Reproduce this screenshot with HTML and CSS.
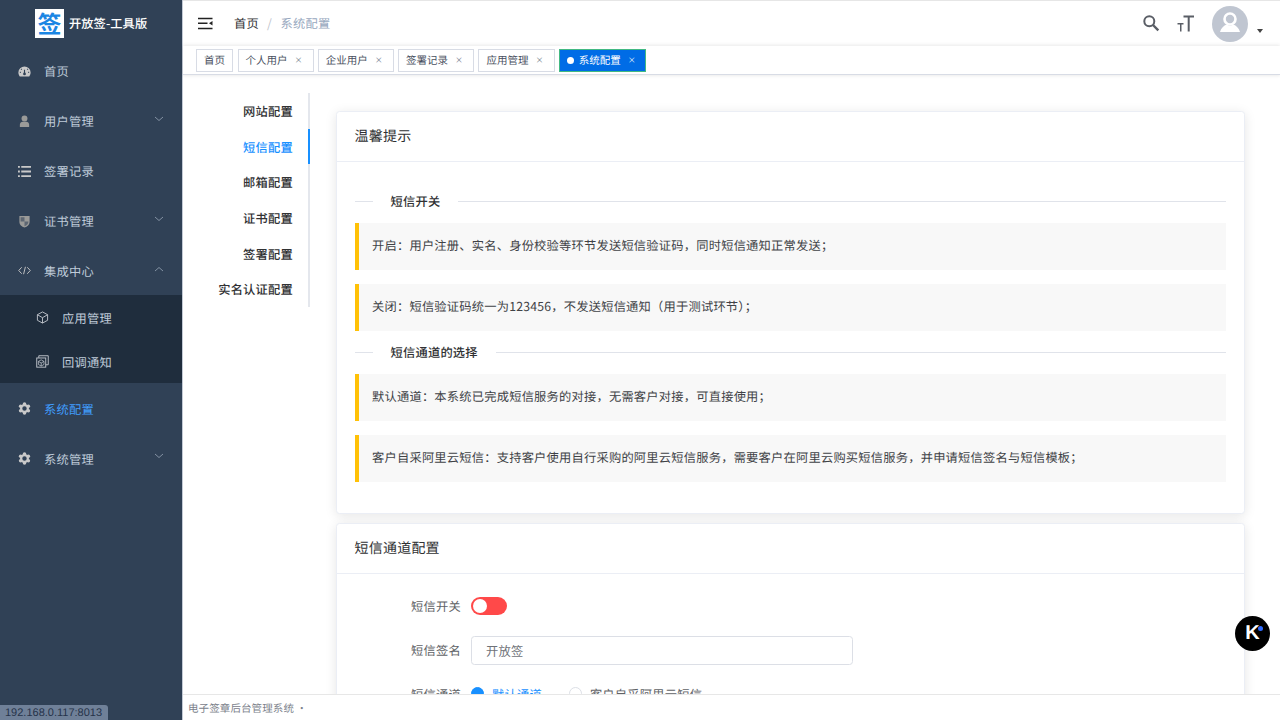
FILE: index.html
```html
<!DOCTYPE html>
<html lang="zh">
<head>
<meta charset="utf-8">
<title>系统配置</title>
<link rel="stylesheet" href="styles.css">
</head>
<body>
<div class="app">
  <aside class="sidebar">
    <div class="logo"><span class="logo-box">签</span><span class="logo-title">开放签-工具版</span></div>
    <nav class="menu">
      <a class="item"><svg class="ic" viewBox="0 0 14 12"><path d="M7 .6A6.6 6.6 0 0 0 .4 7.2c0 1.7.6 3 1.5 4.2h10.2c.9-1.200 1.500-2.500 1.500-4.200A6.600 6.600 0 0 0 7 .6z" fill="#c9c9c9"/><path d="M7 8V4M3 7H2M12 7h-1M4 4 3.300 3.300M10 4l.7-.7" stroke="#304156" stroke-width="1.200"/><circle cx="7" cy="8.600" r="1.500" fill="#304156"/></svg><span>首页</span></a>
      <a class="item"><svg class="ic" viewBox="0 0 14 14"><circle cx="7" cy="3.800" r="3.200" fill="#9a9a98"/><path d="M2 13v-2.500C2 8.500 3.500 7.500 5 7.300h4c1.500.2 3 1.200 3 3.200V13z" fill="#9a9a98"/></svg><span>用户管理</span><svg class="chev" viewBox="0 0 10 6"><path d="M1 1l4 3.500L9 1"/></svg></a>
      <a class="item"><svg class="ic" viewBox="0 0 14 14"><path d="M0 1h2v2H0zM3.500 1H14v2H3.500zM0 6h2v2H0zM3.500 6H14v2H3.500zM0 11h2v2H0zM3.500 11H14v2H3.500z" fill="#c9c9c9"/></svg><span>签署记录</span></a>
      <a class="item"><svg class="ic" viewBox="0 0 14 14"><path d="M1.500 1h11v6.500c0 3-2.500 5-5.500 6-3-1-5.500-3-5.500-6z" fill="#9a9a98"/><path d="M7 2.500v4.500h4.200v.5c0 2-1.800 3.600-4.200 4.600V7H2.800V2.500z" fill="#5d6672"/></svg><span>证书管理</span><svg class="chev" viewBox="0 0 10 6"><path d="M1 1l4 3.500L9 1"/></svg></a>
      <a class="item"><svg class="ic" viewBox="0 0 14 10"><path d="M4 1.500.8 5 4 8.500M10 1.500 13.200 5 10 8.500M8 1 6 9" fill="none" stroke="#c9c9c9" stroke-width="1"/></svg><span>集成中心</span><svg class="chev" viewBox="0 0 10 6"><path d="M1 5l4-3.500L9 5"/></svg></a>
      <div class="submenu">
        <a class="sub"><svg class="ic" viewBox="0 0 14 14"><path d="M7 1l5.500 3v6L7 13l-5.500-3V4zM1.500 4 7 7.200 12.500 4M7 7.200V13" fill="none" stroke="#c0c5cc" stroke-width="1"/></svg><span>应用管理</span></a>
        <a class="sub"><svg class="ic" viewBox="0 0 14 14"><path d="M3 3V.8h10.200v9.700H10.500" fill="none" stroke="#c0c5cc"/><rect x=".8" y="3.200" width="9.700" height="9.900" fill="none" stroke="#c0c5cc"/><path d="M5.600 5.200l3 1.700v3.300l-3 1.700-3-1.700V6.900zM2.600 6.900l3 1.700 3-1.700M5.600 8.600v3.300" fill="none" stroke="#c0c5cc" stroke-width=".8"/></svg><span>回调通知</span></a>
      </div>
      <a class="item active"><svg class="ic" viewBox="0 0 14 14"><g fill="#c9c9c9"><circle cx="7" cy="2.200" r="1.900"/><circle cx="7" cy="11.800" r="1.900"/><circle cx="2.850" cy="4.600" r="1.900"/><circle cx="11.150" cy="4.600" r="1.900"/><circle cx="2.850" cy="9.400" r="1.900"/><circle cx="11.150" cy="9.400" r="1.900"/></g><circle cx="7" cy="7" r="3.600" fill="none" stroke="#c9c9c9" stroke-width="2.400"/></svg><span>系统配置</span></a>
      <a class="item"><svg class="ic" viewBox="0 0 14 14"><g fill="#c9c9c9"><circle cx="7" cy="2.200" r="1.900"/><circle cx="7" cy="11.800" r="1.900"/><circle cx="2.850" cy="4.600" r="1.900"/><circle cx="11.150" cy="4.600" r="1.900"/><circle cx="2.850" cy="9.400" r="1.900"/><circle cx="11.150" cy="9.400" r="1.900"/></g><circle cx="7" cy="7" r="3.600" fill="none" stroke="#c9c9c9" stroke-width="2.400"/></svg><span>系统管理</span><svg class="chev" viewBox="0 0 10 6"><path d="M1 1l4 3.500L9 1"/></svg></a>
    </nav>
  </aside>
  <div class="main">
    <header class="navbar">
      <svg class="hamburger" viewBox="0 0 15 13"><path d="M0 .8h14.500v1.400H0zM0 5.500h9.500v1.400H0zM0 10.800h14.500v1.400H0z" fill="#222"/><path d="M11 6.200l3.500-2.300v4.600z" fill="#222"/></svg>
      <div class="crumbs"><span class="crumb">首页</span><span class="sep">/</span><span class="crumb-cur">系统配置</span></div>
      <div class="nav-right">
        <svg class="nav-ic" viewBox="0 0 17 17"><circle cx="6.300" cy="6.300" r="5" fill="none" stroke="#5a5e66" stroke-width="2"/><path d="M10 10 15.300 15.300" stroke="#5a5e66" stroke-width="2.400"/></svg>
        <svg class="nav-ic size" viewBox="0 0 17 17"><path d="M6.500 .5H17v2h-4.300v14h-2v-14H6.500zM.5 8h6v1.500H4.500v7H3v-7H.5z" fill="#5a5e66"/></svg>
        <div class="avatar"><svg viewBox="0 0 36 36"><circle cx="18" cy="18" r="18" fill="#c0c6d1"/><circle cx="18" cy="13" r="5.500" fill="none" stroke="#fff" stroke-width="2.600"/><path d="M8 26c1-4 4-6.500 6.500-7.500 2 1.500 5 1.500 7 0 2.500 1 5.500 3.500 6.500 7.500z" fill="#fff"/></svg></div>
        <span class="caret"></span>
      </div>
    </header>
    <div class="tags">
      <a class="tag home">首页</a>
      <a class="tag">个人用户<i>×</i></a>
      <a class="tag">企业用户<i>×</i></a>
      <a class="tag">签署记录<i>×</i></a>
      <a class="tag">应用管理<i>×</i></a>
      <a class="tag on"><b></b>系统配置<i>×</i></a>
    </div>
    <div class="content">
      <ul class="tabs">
        <li>网站配置</li>
        <li class="cur">短信配置</li>
        <li>邮箱配置</li>
        <li>证书配置</li>
        <li>签署配置</li>
        <li>实名认证配置</li>
      </ul>
      <div class="panels">
        <section class="card first">
          <div class="card-head">温馨提示</div>
          <div class="card-body tips">
            <div class="divider"><span>短信开关</span></div>
            <div class="alert">开启：用户注册、实名、身份校验等环节发送短信验证码，同时短信通知正常发送；</div>
            <div class="alert">关闭：短信验证码统一为123456，不发送短信通知（用于测试环节）；</div>
            <div class="divider second"><span>短信通道的选择</span></div>
            <div class="alert">默认通道：本系统已完成短信服务的对接，无需客户对接，可直接使用；</div>
            <div class="alert">客户自采阿里云短信：支持客户使用自行采购的阿里云短信服务，需要客户在阿里云购买短信服务，并申请短信签名与短信模板；</div>
          </div>
        </section>
        <section class="card">
          <div class="card-head">短信通道配置</div>
          <div class="card-body form">
            <div class="row"><label>短信开关</label><span class="switch"></span></div>
            <div class="row"><label>短信签名</label><input class="input" type="text" value="开放签"></div>
            <div class="row"><label>短信通道</label><span class="radio sel"></span><span class="radio-text sel">默认通道</span><span class="radio"></span><span class="radio-text">客户自采阿里云短信</span></div>
          </div>
        </section>
      </div>
    </div>
    <footer class="footer">电子签章后台管理系统 ·</footer>
  </div>
</div>
<div class="float-k"><span>K</span><b></b></div>
<div class="status">192.168.0.117:8013</div>
</body>
</html>
```
FILE: styles.css
```css
* { box-sizing: border-box; }
html, body { margin: 0; height: 100%; overflow: hidden; }
body { font-family: "Noto Sans CJK SC", "Liberation Sans", sans-serif; font-size: 12.25px; letter-spacing: .22px; color: #303133; background: #fff; text-rendering: geometricPrecision; }
.app { display: flex; height: 720px; }

.sidebar { width: 183px; flex: none; background: #304156; border-right: 1px solid #c3cad5; color: #bfcbd9; }
.logo { height: 46px; display: flex; align-items: center; padding-left: 35px; }
.logo-box { width: 29px; height: 29px; background: #fff; color: #1b86e3; font-size: 24px; line-height: 27px; text-align: center; font-weight: 700; letter-spacing: 0; }
.logo-title { margin-left: 5px; color: #fff; font-weight: 500; letter-spacing: .05px; }
.menu { display: flex; flex-direction: column; }
.item { position: relative; height: 49.875px; padding-top: 1px; display: flex; align-items: center; padding-left: 18px; }
.ic { width: 13px; height: 13px; flex: none; margin-right: 13px; }
.chev { position: absolute; right: 18px; top: 20px; width: 10px; height: 6px; fill: none; stroke: #8391a3; stroke-width: 1; }
.submenu { background: #1f2d3d; }
.sub { height: 44px; padding-top: 1px; display: flex; align-items: center; padding-left: 36px; }
.active { color: #409eff; }

.main { flex: 1; min-width: 0; display: flex; flex-direction: column; }
.navbar { height: 46px; flex: none; display: flex; align-items: center; padding-left: 15px; border-top: 1px solid #e6e6e6; }
.hamburger { width: 15px; height: 13px; }
.crumbs { margin-left: 21px; display: flex; color: #303133; margin-top: -1px; }
.sep { margin: 0 8.500px 0 8px; color: #c0c4cc; }
.crumb-cur { color: #97a8be; }
.nav-right { margin-left: auto; display: flex; align-items: center; position: relative; padding-right: 17px; }
.nav-ic { width: 17px; height: 17px; }
.size { margin-left: 17px; }
.avatar { width: 36px; height: 36px; margin-left: 18px; }
.avatar svg { display: block; width: 36px; height: 36px; }
.caret { width: 0; height: 0; border: 3.500px solid transparent; border-top: 4px solid #444; margin: 18px 0 0 9px; }

.tags { height: 29px; flex: none; display: flex; gap: 4px; align-items: flex-start; padding: 3px 0 0 13px; background: #fff; border-bottom: 1px solid #d8dce5; position: relative; box-shadow: 0 -2px 3px rgba(0,0,0,.05), 0 1px 3px rgba(0,0,0,.08); }
.tag { height: 23px; display: flex; align-items: center; padding: 0 7px; border: 1px solid #d8dce5; color: #495060; font-size: 10.500px; letter-spacing: 0; }
.tag.home { margin-right: .5px; }
.tag i { font-style: normal; margin: 0 3.300px 0 7px; color: #7d8694; font-size: 8px; }
.tag.on { background: #006ce6; border-color: #42b983; color: #fff; }
.tag.on i { color: #dfe8f5; margin-right: 2.500px; }
.tag b { width: 7px; height: 7px; border-radius: 50%; background: #fff; margin-right: 5px; }

.content { flex: 1; min-height: 0; display: flex; overflow: hidden; padding-top: 18px; }
.tabs { list-style: none; margin: 0; padding: 0; width: 127px; height: 214px; flex: none; border-right: 2px solid #e4e7ed; }
.tabs li { height: 35.700px; line-height: 37px; text-align: right; padding-right: 17px; margin-right: -2px; color: #303133; font-weight: 500; }
.tabs .cur { color: #1890ff; box-shadow: 2px 0 0 -0px #1890ff; margin-right: 0; padding-right: 15px; }
.panels { width: 909px; flex: none; margin-left: 26px; }
.card { background: #fff; border: 1px solid #ebeef5; border-radius: 3.500px; box-shadow: 0 2px 12px rgba(0,0,0,.1); margin-bottom: 9px; }
.first { margin-top: 18px; height: 403px; }
.card-head { height: 50px; line-height: 48px; padding-left: 17.500px; font-size: 14px; color: #303133; border-bottom: 1px solid #ebeef5; }
.tips { padding: 29px 18px 0 17.500px; }
.divider { display: flex; align-items: center; height: 20px; margin-bottom: 12px; font-weight: 500; }
.divider::before { content: ""; width: 18px; height: 1px; background: #e0e3ea; }
.divider::after { content: ""; flex: 1; height: 1px; background: #e0e3ea; }
.divider span { padding: 0 18px 1px; }
.second { margin-top: -3px; }
.alert { height: 47px; line-height: 45px; padding-left: 13.500px; margin-bottom: 14px; background: #f8f8f8; border-left: 4px solid #ffc107; color: #404246; }
.form { padding-top: 21px; }
.row { height: 44px; display: flex; align-items: flex-start; color: #606266; }
.row label { width: 124px; text-align: right; margin-right: 10px; line-height: 22px; padding-top: 0; }
.switch { position: relative; width: 36px; height: 18px; margin-top: 2px; border-radius: 9px; background: #ff4949; }
.switch::after { content: ""; position: absolute; left: 2px; top: 2px; width: 14px; height: 14px; border-radius: 50%; background: #fff; }
.input { width: 382px; height: 29px; margin-top: -3px; padding: 0 14px; border: 1px solid #dcdfe6; border-radius: 3.500px; font: inherit; letter-spacing: inherit; color: #6f7278; outline: none; }
.radio { width: 13px; height: 13px; margin-top: 4px; border-radius: 50%; border: 1px solid #dcdfe6; background: #fff; }
.radio.sel { background: #1890ff; border-color: #1890ff; }
.radio-text { margin: 0 27px 0 8px; line-height: 22px; }
.radio-text.sel { color: #1890ff; }

.footer { height: 26px; flex: none; line-height: 28px; padding-left: 5px; font-size: 10.500px; letter-spacing: .1px; color: #7b818b; border-top: 1px solid #e7e7e7; background: #fff; position: relative; }

.float-k { position: fixed; left: 1235px; top: 616px; width: 35px; height: 35px; border-radius: 50%; background: #000; color: #fff; font: 700 20px/34px "Liberation Sans", sans-serif; letter-spacing: 0; text-align: center; }
.float-k b { position: absolute; left: 23px; top: 10px; width: 5px; height: 5px; border-radius: 50%; background: #2f6bff; }
.status { position: fixed; left: 0; bottom: 0; height: 15px; width: 108px; padding-left: 5px; background: #6f8098; color: #26334a; font: 11px/17px "Liberation Sans", sans-serif; letter-spacing: 0; border-top-right-radius: 3px; }
```
